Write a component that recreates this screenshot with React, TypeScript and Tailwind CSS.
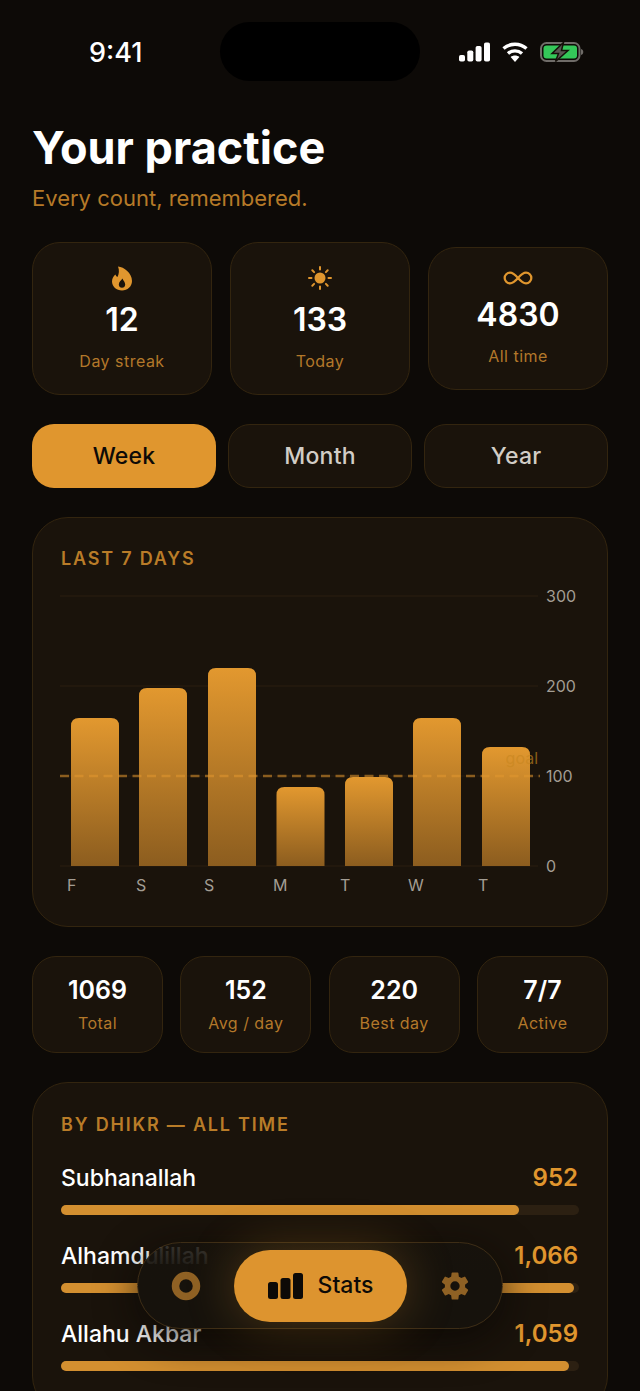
import { Infinity as InfinityIcon } from "lucide-react";
import { IoSettingsSharp } from "react-icons/io5";

const AMBER = "#e0962e";

const week = [
  { day: "F", labelX: 67, x: 71, w: 48, top: 718 },
  { day: "S", labelX: 136, x: 139, w: 48, top: 688 },
  { day: "S", labelX: 204, x: 208, w: 48, top: 668 },
  { day: "M", labelX: 273, x: 276.5, w: 48, top: 787 },
  { day: "T", labelX: 340, x: 345, w: 48, top: 777 },
  { day: "W", labelX: 408, x: 413, w: 48, top: 718 },
  { day: "T", labelX: 478, x: 482, w: 48, top: 747 },
];

const ticks = [
  { label: "300", y: 596 },
  { label: "200", y: 686 },
  { label: "100", y: 776 },
  { label: "0", y: 866 },
];

const dhikr = [
  { name: "Subhanallah", count: "952", fill: 88.5 },
  { name: "Alhamdulillah", count: "1,066", fill: 99 },
  { name: "Allahu Akbar", count: "1,059", fill: 98 },
];

const summary = [
  { value: "1069", label: "Total" },
  { value: "152", label: "Avg / day" },
  { value: "220", label: "Best day" },
  { value: "7/7", label: "Active" },
];

function StatusBar() {
  return (
    <div className="relative h-[81px]">
      <span className="absolute left-[89px] top-[37px] text-[27px] leading-8 font-medium text-white">9:41</span>
      <div className="absolute left-[220px] top-[22px] h-[59px] w-[200px] rounded-[30px] bg-black" />
      <div className="absolute left-[459px] top-[42px] flex items-start gap-[12px]">
        <svg width="31" height="20" viewBox="0 0 31 20" fill="white">
          <rect x="0" y="13" width="6" height="6.500" rx="1.800" />
          <rect x="8.300" y="8.500" width="6" height="11" rx="1.800" />
          <rect x="16.600" y="4" width="6" height="15.500" rx="1.800" />
          <rect x="25" y="0.500" width="6" height="19" rx="1.800" />
        </svg>
        <svg width="26" height="20" viewBox="0 0 26 20" fill="none" stroke="white" strokeWidth="3.400">
          <path d="M1.500 6.500 C8 0.800 18 0.800 24.500 6.500" />
          <path d="M6 11.500 C10 8 16 8 20 11.500" />
          <path d="M13 20 L8.600 15 C11 13 15 13 17.400 15 Z" fill="white" stroke="none" />
        </svg>
        <svg width="44" height="20" viewBox="0 0 44 20" fill="none">
          <rect x="1" y="1" width="38.500" height="18" rx="5.500" stroke="#6f6c68" strokeWidth="2" />
          <rect x="3.500" y="3.500" width="33.500" height="13" rx="3" fill="#34c759" />
          <path d="M41 7 C44 7.500 44 12.500 41 13 Z" fill="#6f6c68" />
          <path d="M23.500 0.500 L12 11.500 H18.500 L15.500 19.500 L28 8.500 H21.500 Z" fill="#5a5753" stroke="#141009" strokeWidth="1.500" />
        </svg>
      </div>
    </div>
  );
}

function FlameIcon() {
  return (
    <svg width="24" height="25" viewBox="0 0 24 25" className="mb-[-1px]">
      <path
        fill={AMBER}
        fillRule="evenodd"
        d="M8 0.500 C14 1 22 7 22 15 C22 20.500 17.500 24.500 12 24.500 C6.500 24.500 2 20.500 2 15.500 C2 12.500 3.500 10 5.500 8.500 C6 10 6.500 10.500 7.500 11 C9 8 9.500 4 8 0.500 Z M12.500 12.500 C11 14.500 8.800 15.800 8.800 18.500 C8.800 20.500 10.200 21.800 12 21.800 C13.800 21.800 15.200 20.500 15.200 18.500 C15.200 16.300 13.500 15 12.500 12.500 Z"
      />
    </svg>
  );
}

function SunIcon() {
  return (
    <svg width="24" height="24" viewBox="0 0 24 24" stroke={AMBER} strokeWidth="2" strokeLinecap="round">
      <circle cx="12" cy="12" r="5.500" fill={AMBER} stroke="none" />
      <path d="M12 1v2.500M12 20.500V23M1 12h2.500M20.500 12H23M4.300 4.300l1.800 1.800M17.900 17.900l1.800 1.800M4.300 19.700l1.800-1.800M17.900 6.100l1.800-1.800" />
    </svg>
  );
}

function StatCard({ icon, value, label }: { icon: React.ReactNode; value: string; label: string }) {
  return (
    <div className="flex flex-col items-center rounded-[28px] border border-[#33250f] bg-[#1a130b] px-2 pt-[23px] pb-[23px]">
      {icon}
      <div className="mt-[12px] text-[32px] leading-9 font-semibold text-white">{value}</div>
      <div className="mt-[13px] text-[16px] leading-5 tracking-[0.03em] text-[#b3782a]">{label}</div>
    </div>
  );
}

function Chart() {
  return (
    <svg viewBox="60 584 520 320" className="block h-[320px] w-[520px]">
      <defs>
        <linearGradient id="barFill" x1="0" y1="0" x2="0" y2="1">
          <stop offset="0" stopColor="#e2982f" />
          <stop offset="1" stopColor="#8c5d1f" />
        </linearGradient>
      </defs>
      {ticks.map((t) => (
        <g key={t.label}>
          <line x1="60" x2="538" y1={t.y} y2={t.y} stroke="#2a1f11" strokeWidth="1" />
          <text x="546" y={t.y + 6} fontSize="16" fill="#a39d93">
            {t.label}
          </text>
        </g>
      ))}
      {week.map((b, i) => (
        <path
          key={i}
          d={`M${b.x} 866 V${b.top + 8} Q${b.x} ${b.top} ${b.x + 8} ${b.top} H${b.x + b.w - 8} Q${b.x + b.w} ${b.top} ${b.x + b.w} ${b.top + 8} V866 Z`}
          fill="url(#barFill)"
        />
      ))}
      <text x="538" y="764" textAnchor="end" fontSize="16" fill="#c8861f" fillOpacity="0.65">
        goal
      </text>
      <line x1="60" x2="540" y1="776" y2="776" stroke="#e2982f" strokeOpacity="0.55" strokeWidth="2.500" strokeDasharray="9 5.500" />
      {week.map((b, i) => (
        <text key={i} x={b.labelX} y="891" fontSize="16" fill="#a39d93">
          {b.day}
        </text>
      ))}
    </svg>
  );
}

function BottomNav() {
  return (
    <div className="absolute bottom-[62px] left-[137px] flex h-[87px] w-[366px] items-center rounded-[44px] border border-[#3d2d16] bg-linear-to-b from-[#16120c]/85 to-[#16120c] to-40% pl-[25px] shadow-[0_10px_40px_rgba(10,7,4,0.75)]">
      <svg width="46" height="46" viewBox="0 0 46 46" fill="none">
        <circle cx="23" cy="23" r="10.500" stroke="#8f6124" strokeWidth="7.500" />
      </svg>
      <div className="ml-[25px] flex h-[72px] w-[173px] items-center justify-center gap-[14px] rounded-[36px] bg-[#dd942f] shadow-[0_0_50px_rgba(224,150,46,0.28)]">
        <svg width="36" height="26" viewBox="0 0 36 26" fill="#0d0a07">
          <rect x="0" y="9" width="10" height="17" rx="2.500" />
          <rect x="12.500" y="5" width="10" height="21" rx="2.500" />
          <rect x="25" y="0" width="10" height="26" rx="2.500" />
        </svg>
        <span className="text-[23px] font-medium text-[#0d0a07]">Stats</span>
      </div>
      <IoSettingsSharp className="ml-[33px] text-[30px] text-[#8f6124]" />
    </div>
  );
}

export default function App() {
  return (
    <div className="relative h-[1391px] w-[640px] overflow-hidden bg-[#0d0a07] font-[Inter,sans-serif]">
      <StatusBar />

      <div className="px-8">
        <h1 className="mt-[39px] text-[45px] leading-[56px] font-bold text-white">Your practice</h1>
        <p className="mt-[8px] text-[22px] leading-7 text-[#b67a28]">Every count, remembered.</p>

        <div className="mt-[30px] grid grid-cols-3 items-center gap-[18px]">
          <StatCard icon={<FlameIcon />} value="12" label="Day streak" />
          <StatCard icon={<SunIcon />} value="133" label="Today" />
          <div className="flex flex-col items-center rounded-[28px] border border-[#33250f] bg-[#1a130b] px-2 pt-[23px] pb-[23px]">
            <InfinityIcon size={32} strokeWidth={1.7} color={AMBER} className="my-[-9px]" />
            <div className="mt-[12px] text-[32px] leading-9 font-semibold text-white">4830</div>
            <div className="mt-[13px] text-[16px] leading-5 tracking-[0.03em] text-[#b3782a]">All time</div>
          </div>
        </div>

        <div className="mt-[29px] grid grid-cols-3 gap-3">
          <div className="flex h-16 items-center justify-center rounded-[22px] bg-[#e0962e] text-[23px] font-medium tracking-[0.01em] text-[#0d0a07]">Week</div>
          <div className="flex h-16 items-center justify-center rounded-[22px] border border-[#33250f] bg-[#1a130b] text-[23px] font-medium tracking-[0.01em] text-[#d2cdc6]">Month</div>
          <div className="flex h-16 items-center justify-center rounded-[22px] border border-[#33250f] bg-[#1a130b] text-[23px] font-medium tracking-[0.01em] text-[#d2cdc6]">Year</div>
        </div>

        <section className="mt-[29px] rounded-[36px] border border-[#33250f] bg-[#1a130b] px-[27px] pt-[28px] pb-[22px]">
          <h2 className="pl-px text-[18px] leading-[26px] font-semibold tracking-[0.1em] text-[#b97c28]">LAST 7 DAYS</h2>
          <div className="mt-[12px]">
            <Chart />
          </div>
        </section>

        <div className="mt-[29px] grid grid-cols-4 gap-[17.33px]">
          {summary.map((s) => (
            <div key={s.label} className="flex h-[97px] flex-col items-center rounded-[24px] border border-[#33250f] bg-[#1a130b] pt-[18px]">
              <div className="text-[25px] leading-[30px] font-semibold text-white">{s.value}</div>
              <div className="mt-[8px] text-[16px] leading-5 tracking-[0.03em] text-[#b3782a]">{s.label}</div>
            </div>
          ))}
        </div>

        <section className="mt-[29px] rounded-[36px] border border-[#33250f] bg-[#1a130b] px-[28px] pt-[29px] pb-10">
          <h2 className="text-[18px] leading-[26px] font-semibold tracking-[0.1em] text-[#b97c28]">BY DHIKR — ALL TIME</h2>
          <div className="mt-[26px] flex flex-col gap-[27px]">
            {dhikr.map((d) => (
              <div key={d.name}>
                <div className="flex items-center justify-between pr-px leading-7">
                  <span className="text-[23px] font-medium text-white">{d.name}</span>
                  <span className="text-[24px] font-semibold text-[#e0962e]">{d.count}</span>
                </div>
                <div className="mt-[13px] h-[10px] rounded-full bg-[#2c2012]">
                  <div className="h-full rounded-full bg-[#d38f30]" style={{ width: `${d.fill}%` }} />
                </div>
              </div>
            ))}
          </div>
        </section>
      </div>

      <BottomNav />
    </div>
  );
}
